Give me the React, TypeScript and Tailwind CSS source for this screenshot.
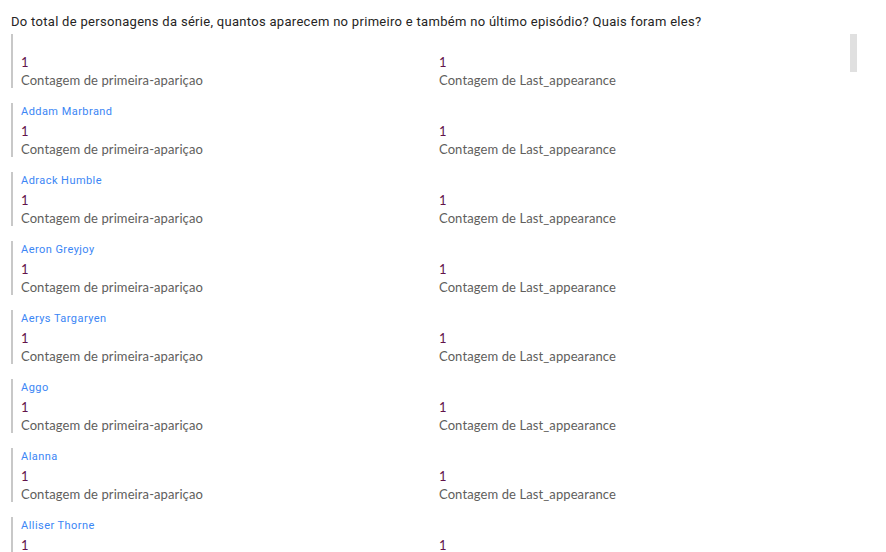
import React from "react";

const names = [
  "",
  "Addam Marbrand",
  "Adrack Humble",
  "Aeron Greyjoy",
  "Aerys Targaryen",
  "Aggo",
  "Alanna",
  "Alliser Thorne",
];

function Metric({ label }: { label: string }) {
  return (
    <div>
      <div className="h-[16px] text-[13px] leading-[16px] text-[#62134a]" style={{ fontFamily: "Lato, sans-serif" }}>1</div>
      <div className="h-[18px] pt-[2px] text-[13px] leading-[16px] tracking-[0.1px] text-[#605e5c]" style={{ fontFamily: "Lato, sans-serif" }}>
        {label}
      </div>
    </div>
  );
}

function Card({ name }: { name: string }) {
  return (
    <div className="flex h-[54px] border-l-2 border-[#c8c8c8] pl-[8px]">
      <div className="flex flex-col">
        <div
          className="h-[16px] pt-[1px] text-[11px] leading-[16px] tracking-[0.45px] text-[#3b86f5]"
          style={{ fontFamily: "Roboto, sans-serif" }}
        >
          {name}
        </div>
        <div className="mt-[4px] grid grid-cols-[418px_418px]">
          <Metric label="Contagem de primeira-apariçao" />
          <Metric label="Contagem de Last_appearance" />
        </div>
      </div>
    </div>
  );
}

export default function App() {
  return (
    <div className="relative h-[552px] w-[886px] overflow-hidden bg-white">
      <div className="px-[11px] pt-[14px]">
        <div
          className="h-[16px] text-[13px] leading-[16px] tracking-[0.3px] text-[#252423]"
          style={{ fontFamily: "Roboto, sans-serif" }}
        >
          Do total de personagens da série, quantos aparecem no primeiro e também no último episódio? Quais foram eles?
        </div>
        <div className="mt-[4px] flex flex-col gap-[15px]">
          {names.map((n, i) => (
            <Card key={i} name={n} />
          ))}
        </div>
      </div>
      <div className="absolute left-[850px] top-[34px] h-[38px] w-[7px] bg-[#e0e0e0]" />
    </div>
  );
}
